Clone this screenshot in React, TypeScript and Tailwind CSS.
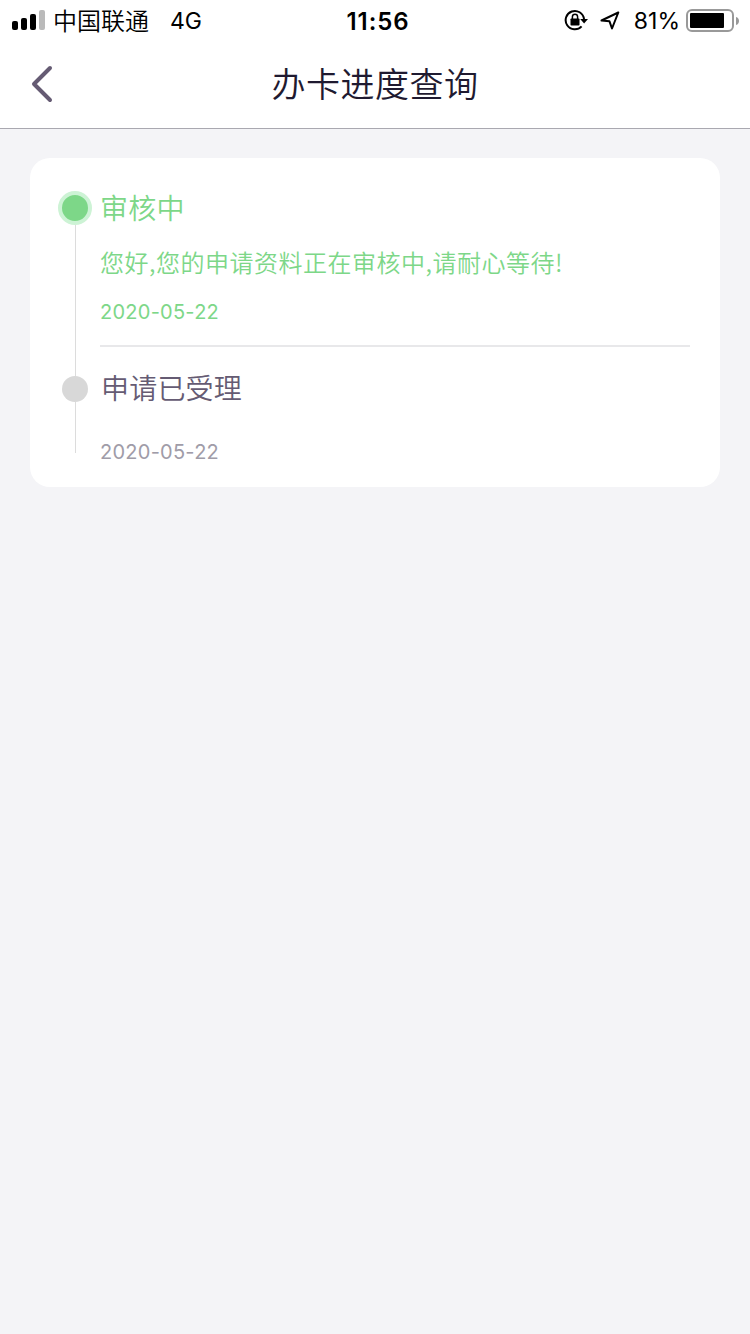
interface ProgressStep {
    title: string,
    message?: string,
    date: string,
    active: boolean,
}

const steps: ProgressStep[] = [
    { title: '审核中', message: '您好,您的申请资料正在审核中,请耐心等待!', date: '2020-05-22', active: true },
    { title: '申请已受理', date: '2020-05-22', active: false },
];

function StatusBar() {
    return (
        <div className="flex h-10 items-center bg-white pl-3 pr-2.5 pt-px text-[24px] leading-none text-black">
            <div className="flex flex-1 items-center">
                <svg width="33" height="20" viewBox="0 0 33 20" className="mb-0.5">
                    <rect x="0" y="11" width="6" height="9" rx="2" />
                    <rect x="9" y="8" width="6" height="12" rx="2" />
                    <rect x="18" y="4" width="6" height="16" rx="2" />
                    <rect x="27" y="0" width="6" height="20" rx="2" fill="#bababa" />
                </svg>
                <span className="ml-2 pt-0.5 font-[350]">中国联通</span>
                <span className="ml-[21px] pt-0.5 text-[23px]">4G</span>
            </div>
            <div className="pt-0.5 pl-1 text-[24px] font-semibold tracking-[0.9px]">11:56</div>
            <div className="flex flex-1 items-center justify-end">
                <svg className="mb-0.5" width="24" height="24" viewBox="0 0 24 24" fill="none" stroke="black" strokeWidth="2">
                    <path d="M17.6 18.4A9.2 9.2 0 1 1 20 11" />
                    <path d="M16.2 11h7.8l-3.9 4.4z" fill="black" stroke="none" />
                    <rect x="6.5" y="10.5" width="9" height="7" rx="0.8" fill="black" stroke="none" />
                    <path d="M8.4 11V8.8a2.6 2.6 0 0 1 5.2 0V11" strokeWidth="1.5" />
                </svg>
                <svg className="ml-3 mb-0.5" width="20" height="20" viewBox="0 0 20 20" fill="none" stroke="black" strokeWidth="2" strokeLinejoin="round">
                    <path d="M18.3 2.5L1.5 10.5l8 .8L12 18.5z" />
                </svg>
                <span className="ml-3.5 pt-0.5 text-[23px]">81%</span>
                <svg className="ml-1.5" width="54" height="24" viewBox="0 0 54 24">
                    <rect x="1" y="1" width="46" height="21" rx="5" fill="none" stroke="#999" strokeWidth="2" />
                    <rect x="4" y="4" width="34" height="15" rx="1" />
                    <path d="M50 8c4 1 4 7 0 8z" fill="#999" />
                </svg>
            </div>
        </div>
    )
}

function NavBar() {
    return (
        <div className="flex h-[89px] items-center border-b border-[#a9a8b0] bg-white px-[30px]">
            <button className="flex w-10">
                <svg width="24" height="38" viewBox="0 0 24 38" fill="none" stroke="#655b73" strokeWidth="4" strokeLinecap="round" strokeLinejoin="round">
                    <path d="M20 3L4 19l16 16" />
                </svg>
            </button>
            <h1 className="flex-1 pt-px text-center text-[34px] font-[350] tracking-[0.5px] text-[#1f1a30]">办卡进度查询</h1>
            <div className="w-10"></div>
        </div>
    )
}

function Step({ step, last }: { step: ProgressStep, last: boolean }) {
    return (
        <div className="flex">
            <div className="flex w-[34px] flex-col items-center">
                {!step.active && <div className="h-[29px] w-px bg-[#dcdcdc]"></div>}
                {step.active
                    ? <div className="mt-[33px] size-[34px] rounded-full border-4 border-[#cdf3d5] bg-[#7dd788]"></div>
                    : <div className="size-[26px] rounded-full bg-[#d8d8d8]"></div>}
                <div className={last ? 'h-[51px] w-px bg-[#dcdcdc]' : 'w-px flex-1 bg-[#dcdcdc]'}></div>
            </div>
            <div className={step.active ? 'ml-2 flex-1 border-b-2 border-[#e8e8ea] pt-[31px] text-[#7dd788]' : 'ml-2 flex-1 pt-[22px] text-[#a09ca8]'}>
                <div className={step.active ? 'text-[28px] leading-10 font-[350] tracking-[0.3px]' : 'pl-px text-[28px] leading-10 font-[350] tracking-[0.2px] text-[#655b73]'}>{step.title}</div>
                {step.message && <div className="mt-[15px] font-['Noto_Sans_CJK_SC',sans-serif] text-[24px] leading-9 font-[350] tracking-[0.5px]">{step.message}</div>}
                <div className={step.message ? 'mt-[18px] mb-[19px] text-[20px] leading-7 tracking-[0.25px]' : 'mt-[29px] text-[20px] leading-7 tracking-[0.25px]'}>{step.date}</div>
            </div>
        </div>
    )
}

export default function App() {
    return (
        <div className="min-h-screen bg-[#f4f4f7] font-['Inter','Noto_Sans_CJK_SC',sans-serif]">
            <StatusBar />
            <NavBar />
            <div className="mx-[30px] mt-[29px] h-[329px] rounded-[20px] bg-white pl-7 pr-[30px]">
                {steps.map((step, i) => <Step key={step.title} step={step} last={i === steps.length - 1} />)}
            </div>
        </div>
    )
}
